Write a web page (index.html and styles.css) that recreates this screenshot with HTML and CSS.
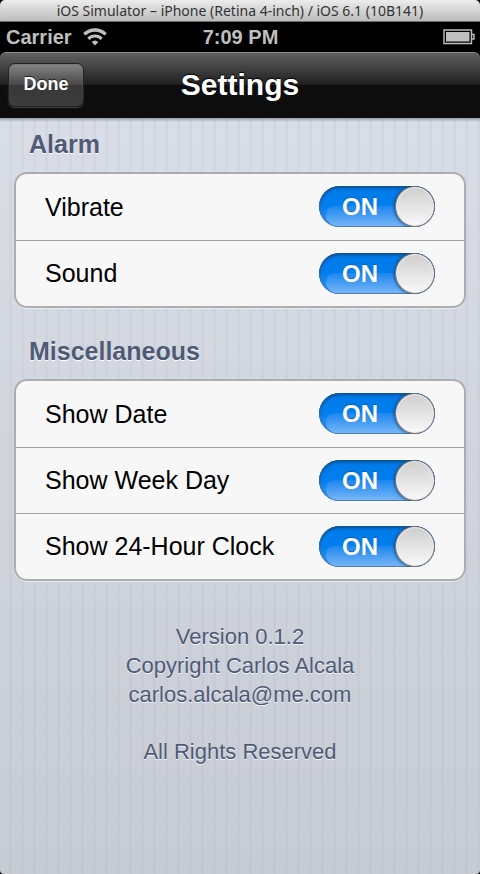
FILE: index.html
```html
<!DOCTYPE html>
<html lang="en">
<head>
<meta charset="utf-8">
<meta name="viewport" content="width=device-width, initial-scale=1">
<title>Settings</title>
<link rel="stylesheet" href="styles.css">
</head>
<body>
<div class="window-title">iOS Simulator – iPhone (Retina 4-inch) / iOS 6.1 (10B141)</div>
<div class="device">
  <div class="status-bar">
    <div class="status-left">
      <span>Carrier</span>
      <svg class="wifi" viewBox="0 0 24 18" aria-hidden="true">
        <path d="M1.3 6.4A15.2 15.2 0 0 1 22.7 6.4" fill="none" stroke="currentColor" stroke-width="3.4"/>
        <path d="M5.4 10.8A9.2 9.2 0 0 1 18.6 10.8" fill="none" stroke="currentColor" stroke-width="3.2"/>
        <path d="M8.7 14A4.8 4.8 0 0 1 15.3 14L12 17.4Z" fill="currentColor"/>
      </svg>
    </div>
    <span class="time">7:09 PM</span>
    <svg class="battery" viewBox="0 0 32 16" aria-hidden="true">
      <path d="M1 1H28.500V14.500H1Z" fill="none" stroke="currentColor" stroke-width="1.4"/>
      <path d="M28.500 5.500H31V10H28.500" fill="none" stroke="currentColor" stroke-width="1.4"/>
      <path d="M3 3H26.500V12.500H3Z" fill="currentColor"/>
    </svg>
  </div>
  <header class="nav-bar">
    <button class="done" type="button">Done</button>
    <h1>Settings</h1>
  </header>
  <main>
    <section>
      <h2>Alarm</h2>
      <div class="group">
        <div class="row"><label for="vibrate">Vibrate</label><span class="switch"><input id="vibrate" type="checkbox" role="switch" checked><span class="state" aria-hidden="true">ON</span></span></div>
        <div class="row"><label for="sound">Sound</label><span class="switch"><input id="sound" type="checkbox" role="switch" checked><span class="state" aria-hidden="true">ON</span></span></div>
      </div>
    </section>
    <section>
      <h2>Miscellaneous</h2>
      <div class="group">
        <div class="row"><label for="date">Show Date</label><span class="switch"><input id="date" type="checkbox" role="switch" checked><span class="state" aria-hidden="true">ON</span></span></div>
        <div class="row"><label for="weekday">Show Week Day</label><span class="switch"><input id="weekday" type="checkbox" role="switch" checked><span class="state" aria-hidden="true">ON</span></span></div>
        <div class="row"><label for="clock">Show 24-Hour Clock</label><span class="switch"><input id="clock" type="checkbox" role="switch" checked><span class="state" aria-hidden="true">ON</span></span></div>
      </div>
    </section>
    <footer>
      <p>Version 0.1.2<br>Copyright Carlos Alcala<br>carlos.alcala@me.com</p>
      <p>All Rights Reserved</p>
    </footer>
  </main>
</div>
</body>
</html>
```
FILE: styles.css
```css
*, *::before, *::after { box-sizing: border-box; }

body {
  margin: 0;
  min-height: 100vh;
  display: flex;
  flex-direction: column;
  background: #000;
  font-family: "Liberation Sans", Arial, sans-serif;
}

h1, h2, p { margin: 0; }

.window-title {
  height: 22px;
  border-bottom: 1px solid #6b6b6b;
  border-radius: 5px 5px 0 0;
  background: linear-gradient(#ececec, #bcbcbc);
  color: #333;
  font: 14px/22px "Noto Sans", sans-serif;
  text-align: center;
  white-space: nowrap;
}

.device {
  flex: 1;
  display: flex;
  flex-direction: column;
}

.status-bar {
  height: 30px;
  padding: 0 5px 0 6px;
  display: grid;
  grid-template-columns: 1fr auto 1fr;
  align-items: center;
  color: #bfbfbf;
  font-size: 20px;
  font-weight: bold;
}

.status-left {
  display: flex;
  align-items: center;
  gap: 11px;
}

.wifi { width: 24px; height: 18px; }
.battery { width: 32px; height: 16px; justify-self: end; }

.nav-bar {
  height: 66px;
  padding: 0 8px 2px;
  display: grid;
  grid-template-columns: 1fr auto 1fr;
  align-items: center;
  border-top: 1px solid #8c8c8c;
  border-radius: 6px 6px 0 0;
  background: linear-gradient(#606060, #1e1e1e 50%, #0d0d0d 50%, #0d0d0d);
  color: #fff;
}

h1 {
  font-size: 30px;
  line-height: 36px;
  text-shadow: 0 -1px 1px #000;
}

.done {
  justify-self: start;
  width: 76px;
  height: 44px;
  padding: 0 0 2px;
  border: 1px solid #222;
  border-radius: 7px;
  background: linear-gradient(#858585, #484848 50%, #383838 50%, #3d3d3d);
  box-shadow: 0 1px 1px #444, inset 0 1px 1px #777;
  color: #fff;
  font: bold 18px/22px "Liberation Sans", Arial, sans-serif;
  text-shadow: 0 -1px 1px #222;
}

main {
  flex: 1;
  padding: 9px 14px;
  border-radius: 0 0 4px 4px;
  background:
    linear-gradient(rgba(60, 65, 80, 0.4), transparent) top / 100% 4px no-repeat,
    repeating-linear-gradient(90deg, transparent 0 9px, rgba(110, 125, 150, 0.05) 9px 12px),
    linear-gradient(#d8dde6, #c7cbd4);
}

section { margin-bottom: 26px; }

h2 {
  padding: 0 15px;
  margin-bottom: 11px;
  color: #4f5a75;
  font-size: 25px;
  line-height: 34px;
  text-shadow: 0 1px 0 #fff;
}

.group {
  border: 2px solid #acadaf;
  border-radius: 13px;
  background: #f7f7f7;
  box-shadow: 0 1px 0 #e8ebf0;
}

.row {
  height: 66px;
  padding: 0 29px;
  display: flex;
  align-items: center;
  justify-content: space-between;
  color: #000;
  font-size: 25px;
}

.row + .row {
  border-top: 1px solid #a2a2a2;
}

.switch {
  position: relative;
  width: 116px;
  height: 42px;
}

.switch input {
  appearance: none;
  display: flex;
  justify-content: flex-end;
  width: 100%;
  height: 41px;
  margin: 0;
  overflow: hidden;
  border-radius: 21px;
  background: linear-gradient(#0079e8, #007fee 50%, #3d9af3);
  box-shadow: inset 0 2px 3px #0c4c8d, inset 0 0 0 1px #527faf;
}

.switch input::before {
  content: "";
  flex: 1;
  align-self: flex-end;
  height: 20px;
  margin: 0 -20px 1px 7px;
  border-radius: 14px 0 0 18px;
  background: linear-gradient(#1c87ef, #75b5f8);
}

.switch input::after {
  content: "";
  position: relative;
  flex: none;
  width: 40px;
  height: 41px;
  border: 1px solid #777;
  border-radius: 50%;
  background: linear-gradient(#cecece, #f9f9f9);
  box-shadow: -1px 0 3px #174a7d, inset 0 0 1px 1px #eee;
}

.switch input:not(:checked) {
  justify-content: flex-start;
  background: #eee;
  box-shadow: inset 0 2px 3px #999;
}

.switch input:not(:checked)::before,
.switch input:not(:checked) + .state { display: none; }

.state {
  position: absolute;
  inset: 0 34px 0 0;
  color: #fff;
  font-size: 24px;
  font-weight: bold;
  line-height: 42px;
  text-align: center;
  text-shadow: 0 -1px 1px #0b5fb0;
  pointer-events: none;
}

footer {
  padding-top: 15px;
  color: #4f5a75;
  font-size: 22px;
  line-height: 29px;
  text-align: center;
  text-shadow: 0 1px 0 #f4f5f8;
}

footer p + p { margin-top: 28px; }
```
